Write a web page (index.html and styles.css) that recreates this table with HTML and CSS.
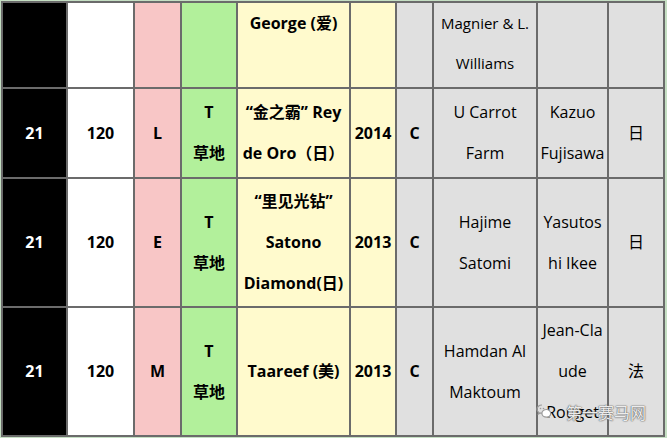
FILE: index.html
```html
<!DOCTYPE html>
<html lang="zh">
<head>
<meta charset="utf-8">
<link rel="stylesheet" href="styles.css">
</head>
<body>
<div class="wrap">
<table class="grid">
  <colgroup>
    <col class="c1"><col class="c2"><col class="c3"><col class="c4"><col class="c5">
    <col class="c6"><col class="c7"><col class="c8"><col class="c9"><col class="c10">
  </colgroup>
  <tr class="r1">
    <td class="k"></td>
    <td class="w"></td>
    <td class="p"></td>
    <td class="g"></td>
    <td class="y b">George (爱)</td>
    <td class="y"></td>
    <td class="gr"></td>
    <td class="gr n sm">Magnier &amp; L.<br>Williams</td>
    <td class="gr"></td>
    <td class="gr"></td>
  </tr>
  <tr class="r2">
    <td class="k b">21</td>
    <td class="w b">120</td>
    <td class="p b">L</td>
    <td class="g b">T<br>草地</td>
    <td class="y b">“金之霸” Rey<br>de Oro（日）</td>
    <td class="y b">2014</td>
    <td class="gr b">C</td>
    <td class="gr n">U Carrot<br>Farm</td>
    <td class="gr n">Kazuo<br>Fujisawa</td>
    <td class="gr n">日</td>
  </tr>
  <tr class="r3">
    <td class="k b">21</td>
    <td class="w b">120</td>
    <td class="p b">E</td>
    <td class="g b">T<br>草地</td>
    <td class="y b">“里见光钻”<br>Satono<br>Diamond(日)</td>
    <td class="y b">2013</td>
    <td class="gr b">C</td>
    <td class="gr n">Hajime<br>Satomi</td>
    <td class="gr n">Yasutos<br>hi Ikee</td>
    <td class="gr n">日</td>
  </tr>
  <tr class="r4">
    <td class="k b">21</td>
    <td class="w b">120</td>
    <td class="p b">M</td>
    <td class="g b">T<br>草地</td>
    <td class="y b">Taareef (美)</td>
    <td class="y b">2013</td>
    <td class="gr b">C</td>
    <td class="gr n">Hamdan Al<br>Maktoum</td>
    <td class="gr n">Jean-Cla<br>ude<br>Rouget</td>
    <td class="gr n">法</td>
  </tr>
</table>
<div class="mark">
  <svg class="wx" width="16" height="14" viewBox="0 0 16 14" aria-hidden="true">
    <path d="M6 1C3 1 1 3 1 5.2c0 1.3.7 2.4 1.8 3.2L2.4 10l1.9-1c.5.1 1 .2 1.6.2" fill="none" stroke="#9a9a9a" stroke-width="1.2"/>
    <path d="M10.5 5.5c-2.6 0-4.6 1.7-4.6 3.8s2 3.8 4.6 3.8c.5 0 1-.1 1.4-.2l1.6.9-.4-1.4c1-.7 1.6-1.8 1.6-3 0-2.1-2-3.900-4.2-3.9z" fill="#fff" stroke="#9a9a9a" stroke-width="1.2"/>
    <circle cx="4.5" cy="4.5" r=".8" fill="#9a9a9a"/><circle cx="7.5" cy="4.5" r=".8" fill="#9a9a9a"/>
  </svg>
  <span class="wm">第一赛马网</span>
</div>
</div>
</body>
</html>
```
FILE: styles.css
```css
html, body {
  margin: 0;
  padding: 0;
  background: #c5dfc3;
}
.wrap {
  position: relative;
  width: 667px;
  height: 438px;
  overflow: hidden;
}
.grid {
  border-collapse: collapse;
  table-layout: fixed;
  width: 664px;
  margin: 1px 0 0 1px;
  font-family: "Open Sans", "Noto Sans CJK SC", sans-serif;
  font-size: 16px;
  color: #000;
}
.grid td {
  border: 2px solid #6b6b6b;
  padding: 0;
  text-align: center;
  vertical-align: middle;
  line-height: 41px;
  overflow: hidden;
  white-space: nowrap;
}
.c1 { width: 65px; }
.c2 { width: 67px; }
.c3 { width: 47px; }
.c4 { width: 56px; }
.c5 { width: 113px; }
.c6 { width: 46px; }
.c7 { width: 37px; }
.c8 { width: 104px; }
.c9 { width: 71px; }
.c10 { width: 56px; }

.r1 { height: 86px; }
.r1 td { vertical-align: top; line-height: 40px; }
.r2 { height: 90px; }
.r3 { height: 129px; }
.r4 { height: 129px; }

.k { background: #000; color: #fff; }
.w { background: #fff; }
.p { background: #f8c6c6; }
.g { background: #b2f09b; }
.y { background: #fffacd; }
.gr { background: #e0e0e0; }
.b { font-weight: 700; }
.n { font-weight: 400; }
.sm { font-size: 15px; }

.mark {
  position: absolute;
  left: 536px;
  top: 399px;
  display: flex;
  align-items: center;
  gap: 14px;
}
.wm {
  font-family: "Noto Sans CJK SC", sans-serif;
  font-size: 16px;
  line-height: 20px;
  margin-top: 3px;
  color: rgba(255, 255, 255, 0.9);
  text-shadow: 0 0 1px #666, 0 0 1px #666, 0 0 2px #888;
}
```
